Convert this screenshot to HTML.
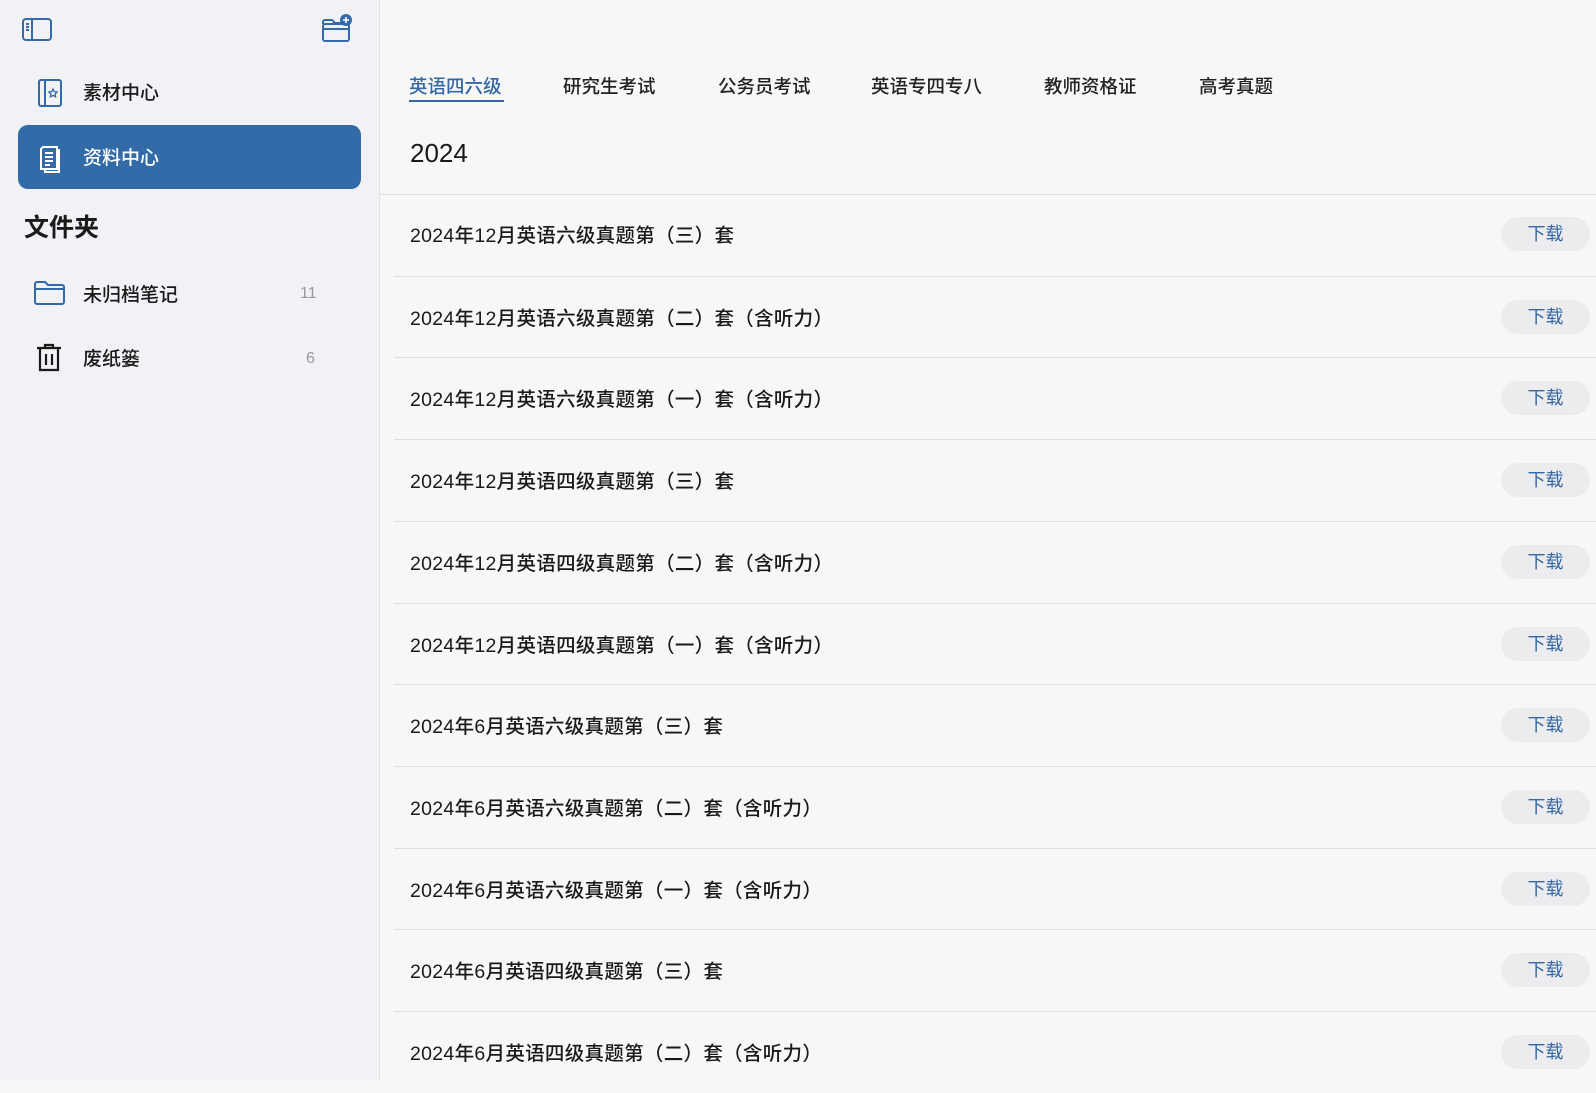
<!DOCTYPE html>
<html><head><meta charset="utf-8"><style>
*{margin:0;padding:0;box-sizing:border-box}
body{width:1596px;height:1080px;overflow:hidden;background:#f7f7f7;font-family:"Liberation Sans","Noto Sans CJK SC",sans-serif;color:#1a1a1a;position:relative}
.side{position:absolute;left:0;top:0;width:380px;height:1080px;background:#f1f1f6;border-right:1px solid #e2e2e6}
.abs{position:absolute}
.item{position:absolute;left:18px;width:343px;height:64px;border-radius:10px;font-size:19px;line-height:64px;padding-left:65px;font-weight:500;padding-top:2px}
.sel{background:#336aa8;color:#fff}
.cnt{position:absolute;font-size:16px;color:#9a9a9a}
.tab{position:absolute;top:74px;font-size:18.5px;line-height:26px;color:#222;font-weight:500}
.row{position:absolute;left:394px;right:0;height:82px;border-top:1px solid #dedede}
.row span{position:absolute;left:16px;top:29px;font-size:19.5px;line-height:26px;color:#1a1a1a;font-weight:500;letter-spacing:0.3px}
.row b{position:absolute;right:6px;top:23px;width:89px;height:34px;border-radius:17px;background:#ececee;color:#3567a3;font-weight:normal;font-size:18px;line-height:34px;text-align:center}
</style></head><body>
<div class="side">
<svg class="abs" style="left:21px;top:17px" width="32" height="26" viewBox="0 0 32 26" fill="none" stroke="#336aa8" stroke-width="2"><rect x="2" y="2" width="28" height="21" rx="3"/><line x1="11" y1="2" x2="11" y2="23"/><line x1="5" y1="7" x2="8" y2="7"/><line x1="5" y1="10" x2="8" y2="10"/><line x1="5" y1="13" x2="8" y2="13"/></svg>
<svg class="abs" style="left:320px;top:12px" width="34" height="32" viewBox="0 0 34 32" fill="none" stroke="#336aa8" stroke-width="2"><path d="M3 12 V10 a2 2 0 0 1 2-2 h7 l3 3 h8"/><rect x="3" y="12" width="26" height="17" rx="2"/><line x1="3" y1="17" x2="29" y2="17"/><circle cx="26" cy="8" r="6" fill="#336aa8" stroke="none"/><path d="M26 5v6M23 8h6" stroke="#fff" stroke-width="1.6"/></svg>
<div class="item" style="top:60px">素材中心</div>
<svg class="abs" style="left:37px;top:78px" width="26" height="30" viewBox="0 0 26 30" fill="none" stroke="#336aa8" stroke-width="2"><rect x="2" y="2" width="22" height="26" rx="2"/><line x1="8" y1="2" x2="8" y2="28"/><path d="M16 11l1.3 2.6 2.8.4-2 2 .5 2.8-2.6-1.4-2.6 1.4.5-2.8-2-2 2.8-.4z" stroke-width="1.3"/></svg>
<div class="item sel" style="top:125px">资料中心</div>
<svg class="abs" style="left:37px;top:143px" width="26" height="30" viewBox="0 0 26 30" fill="none" stroke="#fff" stroke-width="2"><path d="M6 4h14v22H4V6z"/><path d="M20 7h2v22H8v-3"/><line x1="8" y1="10" x2="16" y2="10"/><line x1="8" y1="14" x2="16" y2="14"/><line x1="8" y1="18" x2="16" y2="18"/><line x1="8" y1="22" x2="13" y2="22"/></svg>
<div class="abs" style="left:24px;top:211px;font-size:25px;font-weight:bold;line-height:34px">文件夹</div>
<svg class="abs" style="left:33px;top:280px" width="33" height="26" viewBox="0 0 33 26" fill="none" stroke="#336aa8" stroke-width="2"><path d="M2 6V4a2 2 0 0 1 2-2h8l3 3h14a2 2 0 0 1 2 2v15a2 2 0 0 1-2 2H4a2 2 0 0 1-2-2z"/><line x1="2" y1="9" x2="31" y2="9"/></svg>
<div class="abs" style="left:83px;top:283px;font-size:19px;line-height:26px;font-weight:500">未归档笔记</div>
<div class="cnt" style="left:300px;top:285px">11</div>
<svg class="abs" style="left:36px;top:343px" width="26" height="30" viewBox="0 0 26 30" fill="none" stroke="#1a1a1a" stroke-width="2.2"><line x1="1" y1="5" x2="25" y2="5"/><path d="M9 5V2h8v3"/><path d="M4 5v22h18V5"/><line x1="10" y1="11" x2="10" y2="22"/><line x1="16" y1="11" x2="16" y2="22"/></svg>
<div class="abs" style="left:83px;top:347px;font-size:19px;line-height:26px;font-weight:500">废纸篓</div>
<div class="cnt" style="left:306px;top:350px">6</div>
</div>
<div class="tab" style="left:409px;color:#3567a3">英语四六级</div>
<div class="abs" style="left:409px;top:100px;width:95px;height:2px;background:#3567a3"></div>
<div class="tab" style="left:563px">研究生考试</div>
<div class="tab" style="left:718px">公务员考试</div>
<div class="tab" style="left:871px">英语专四专八</div>
<div class="tab" style="left:1044px">教师资格证</div>
<div class="tab" style="left:1199px">高考真题</div>
<div class="abs" style="left:410px;top:137px;font-size:26px;line-height:32px;font-weight:500">2024</div>
<div class="abs" style="left:380px;right:0;top:194px;height:1px;background:#dedede"></div>
<div class="row" style="top:194px;border-top:none"><span>2024年12月英语六级真题第（三）套</span><b>下载</b></div>
<div class="row" style="top:275.7px"><span>2024年12月英语六级真题第（二）套（含听力）</span><b>下载</b></div>
<div class="row" style="top:357.4px"><span>2024年12月英语六级真题第（一）套（含听力）</span><b>下载</b></div>
<div class="row" style="top:439.1px"><span>2024年12月英语四级真题第（三）套</span><b>下载</b></div>
<div class="row" style="top:520.8px"><span>2024年12月英语四级真题第（二）套（含听力）</span><b>下载</b></div>
<div class="row" style="top:602.5px"><span>2024年12月英语四级真题第（一）套（含听力）</span><b>下载</b></div>
<div class="row" style="top:684.2px"><span>2024年6月英语六级真题第（三）套</span><b>下载</b></div>
<div class="row" style="top:765.9px"><span>2024年6月英语六级真题第（二）套（含听力）</span><b>下载</b></div>
<div class="row" style="top:847.6px"><span>2024年6月英语六级真题第（一）套（含听力）</span><b>下载</b></div>
<div class="row" style="top:929.3px"><span>2024年6月英语四级真题第（三）套</span><b>下载</b></div>
<div class="row" style="top:1011px"><span>2024年6月英语四级真题第（二）套（含听力）</span><b>下载</b></div>
</body></html>
